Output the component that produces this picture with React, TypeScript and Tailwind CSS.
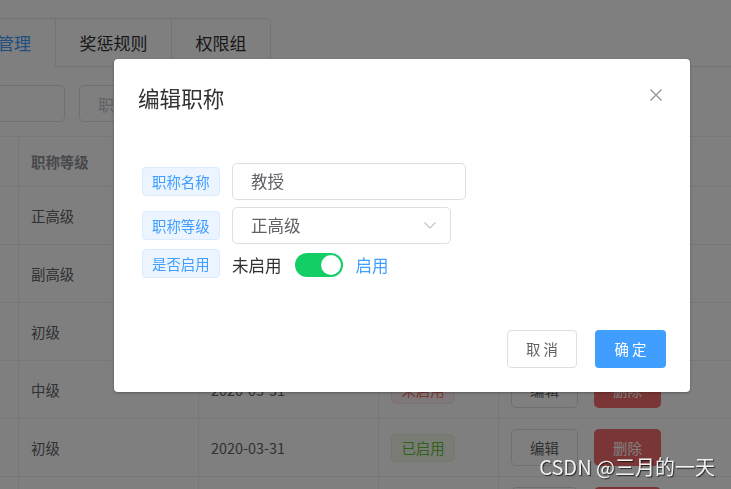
import React from 'react';

type Row = { level: string; date: string; on: boolean };

const rows: Row[] = [
  { level: '正高级', date: '2020-03-31', on: true },
  { level: '副高级', date: '2020-03-31', on: true },
  { level: '初级', date: '2020-03-31', on: true },
  { level: '中级', date: '2020-03-31', on: false },
  { level: '初级', date: '2020-03-31', on: true },
  { level: '中级', date: '2020-03-31', on: true },
];

function StatusTag({ on }: { on: boolean }) {
  if (on) {
    return (
      <span className="inline-flex h-[28px] w-[64px] items-center justify-center rounded-[5px] border border-[#e1f3d8] bg-[#f0f9eb] text-[14.4px] text-[#67c23a]">
        已启用
      </span>
    );
  }
  return (
    <span className="inline-flex h-[28px] w-[64px] items-center justify-center rounded-[5px] border border-[#fde2e2] bg-[#fef0f0] text-[14.4px] text-[#f56c6c]">
      未启用
    </span>
  );
}

function Tabs() {
  return (
    <div className="-ml-[61px] mt-[18px] flex h-[49px]">
      <div className="flex rounded-tr-[5px] border-t border-r border-[#e4e7ed]">
        <div className="flex w-[116px] items-center justify-center text-[17px] text-[#409eff]">职称管理</div>
        <div className="flex w-[116px] items-center justify-center border-l border-b border-[#e4e7ed] text-[17px] text-[#303133]">
          奖惩规则
        </div>
        <div className="flex w-[99px] items-center justify-center border-l border-b border-[#e4e7ed] text-[17px] text-[#303133]">
          权限组
        </div>
      </div>
      <div className="flex-1 border-b border-[#e4e7ed]" />
    </div>
  );
}

function SearchBar() {
  return (
    <div className="-ml-[135px] mt-[18px] flex gap-[14px]">
      <div className="h-[37px] w-[200px] rounded-[5px] border border-[#dcdfe6] bg-white" />
      <div className="flex h-[37px] w-[200px] items-center rounded-[5px] border border-[#dcdfe6] bg-white px-[18px] text-[16px] text-[#c0c4cc]">
        职称名称
      </div>
    </div>
  );
}

function Table() {
  return (
    <div className="mt-[14px] border-t border-[#ebeef5] text-[14.4px]">
      <div className="flex h-[50px] border-b border-[#ebeef5] font-bold text-[#909399]">
        <div className="w-[19px] border-r border-[#ebeef5]" />
        <div className="flex w-[180px] items-center border-r border-[#ebeef5] pl-[12px]">职称等级</div>
        <div className="flex w-[180px] items-center border-r border-[#ebeef5] pl-[12px]">创建时间</div>
        <div className="flex w-[120px] items-center border-r border-[#ebeef5] pl-[12px]">是否启用</div>
        <div className="flex flex-1 items-center pl-[12px]">操作</div>
      </div>
      {rows.map((row, i) => (
        <div key={i} className="flex h-[58px] border-b border-[#ebeef5] text-[#606266]">
          <div className="w-[19px] border-r border-[#ebeef5]" />
          <div className="flex w-[180px] items-center border-r border-[#ebeef5] pl-[12px]">{row.level}</div>
          <div className="flex w-[180px] items-center border-r border-[#ebeef5] pl-[12px]">{row.date}</div>
          <div className="flex w-[120px] items-center border-r border-[#ebeef5] pl-[12px]">
            <StatusTag on={row.on} />
          </div>
          <div className="flex flex-1 items-center gap-[16px] pl-[12px]">
            <span className="flex h-[37px] w-[67px] items-center justify-center rounded-[5px] border border-[#dcdfe6] bg-white text-[#606266]">
              编辑
            </span>
            <span className="flex h-[37px] w-[67px] items-center justify-center rounded-[5px] bg-[#f56c6c] text-white">
              删除
            </span>
          </div>
        </div>
      ))}
    </div>
  );
}

function LabelTag({ children }: { children: React.ReactNode }) {
  return (
    <span className="inline-flex h-[29px] items-center rounded-[4px] border border-[#d9ecff] bg-[#ecf5ff] px-[9px] text-[14.4px] text-[#409eff]">
      {children}
    </span>
  );
}

function Dialog() {
  return (
    <div className="ml-[114px] mt-[59px] flex h-[333px] w-[576px] flex-col rounded-[4px] bg-white shadow-[0_1px_3px_rgba(0,0,0,0.3)]">
      <div className="flex items-start justify-between pl-[24px] pr-[28px] pt-[24px]">
        <h2 className="text-[21.6px] leading-[29px] text-[#303133]">编辑职称</h2>
        <svg className="mt-[6px]" width="12" height="12" viewBox="0 0 12 12" fill="none">
          <path d="M0.5 0.5L11.5 11.5M11.5 0.5L0.5 11.5" stroke="#909399" strokeWidth="1.3" />
        </svg>
      </div>

      <div className="flex flex-col pl-[28px] pt-[51px] text-[16.5px]">
        <div className="flex h-[37px] items-center">
          <div className="w-[90px]">
            <LabelTag>职称名称</LabelTag>
          </div>
          <div className="flex h-[37px] w-[234px] items-center rounded-[5px] border border-[#dcdfe6] px-[18px] text-[#606266]">
            教授
          </div>
        </div>
        <div className="mt-[7px] flex h-[37px] items-center">
          <div className="w-[90px]">
            <LabelTag>职称等级</LabelTag>
          </div>
          <div className="flex h-[37px] w-[219px] items-center justify-between rounded-[5px] border border-[#dcdfe6] pl-[18px] pr-[14px] text-[#606266]">
            <span>正高级</span>
            <svg width="12" height="7" viewBox="0 0 12 7" fill="none">
              <path d="M0.5 0.5L6 6L11.5 0.5" stroke="#c0c4cc" strokeWidth="1.2" />
            </svg>
          </div>
        </div>
        <div className="mt-[5px] flex h-[29px] items-center">
          <div className="w-[90px]">
            <LabelTag>是否启用</LabelTag>
          </div>
          <div className="mt-[3px] flex items-center">
            <span className="text-[#303133]">未启用</span>
            <span className="mx-[13px] flex h-[24px] w-[48px] items-center justify-end rounded-full bg-[#13ce66] px-[2px]">
              <span className="h-[20px] w-[20px] rounded-full bg-white" />
            </span>
            <span className="text-[#409eff]">启用</span>
          </div>
        </div>
      </div>

      <div className="mt-auto flex justify-end gap-[18px] px-[24px] pb-[24px] text-[14.4px]">
        <span className="flex h-[38px] w-[70px] items-center justify-center rounded-[4px] border border-[#dcdfe6] bg-white text-[#606266]">
          取 消
        </span>
        <span className="flex h-[38px] w-[71px] items-center justify-center rounded-[4px] bg-[#409eff] text-white">
          确 定
        </span>
      </div>
    </div>
  );
}

export default function App() {
  return (
    <div className="relative h-[489px] w-[731px] overflow-hidden bg-white font-['Noto_Sans_CJK_SC','Microsoft_YaHei',sans-serif]">
      <Tabs />
      <SearchBar />
      <Table />
      <div className="fixed inset-0 bg-black/50">
        <Dialog />
      </div>
      <div className="absolute bottom-[8px] right-[16px] z-10 text-[20px] leading-[28px] text-[#f2f2f2] [text-shadow:1px_1px_1px_rgba(0,0,0,0.7)]">
        CSDN @三月的一天
      </div>
    </div>
  );
}
